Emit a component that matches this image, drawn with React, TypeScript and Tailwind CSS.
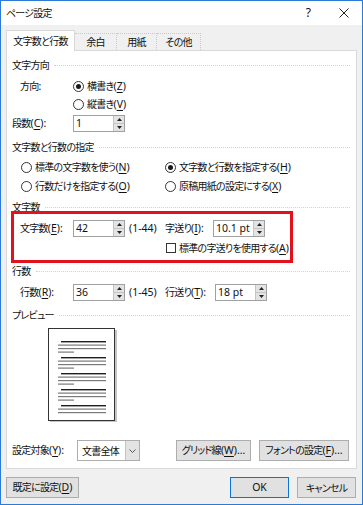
import React from "react";

const F = { fontFamily: '"Noto Sans CJK JP", "Noto Sans", sans-serif' };
const LAT = "font-['Noto_Sans',sans-serif] text-[10.5px] tracking-normal";

function L({ children }: { children: React.ReactNode }) {
  return <span className={LAT}>{children}</span>;
}

function Lab({ t, k, s }: { t: string; k: string; s?: string }) {
  return (
    <span>
      {t}
      <span className={LAT}>
        (<span className="underline underline-offset-[1.5px]">{k}</span>){s ?? ""}
      </span>
    </span>
  );
}

function Radio({ on }: { on?: boolean }) {
  return (
    <span className="w-[11px] h-[11px] rounded-full border border-[#333] bg-white flex items-center justify-center shrink-0">
      {on && <span className="w-[5px] h-[5px] rounded-full bg-[#1a1a1a]" />}
    </span>
  );
}

function Spin({ value, w }: { value: string; w: number }) {
  return (
    <div
      className="h-[17px] border border-[#a0a0a0] bg-white flex items-stretch shrink-0"
      style={{ width: w }}
    >
      <div className={"flex-1 pl-[2px] flex items-center " + LAT}>{value}</div>
      <div className="w-[11px] flex flex-col border-l border-[#c4c4c4]">
        <div className="flex-1 bg-[#e3e3e3] border-b border-[#c4c4c4] flex items-center justify-center">
          <svg width="5" height="3" viewBox="0 0 5 3"><path d="M0 3L2.5 0L5 3Z" fill="#222" /></svg>
        </div>
        <div className="flex-1 bg-[#e3e3e3] flex items-center justify-center">
          <svg width="5" height="3" viewBox="0 0 5 3"><path d="M0 0L5 0L2.5 3Z" fill="#222" /></svg>
        </div>
      </div>
    </div>
  );
}

function Section({ title }: { title: string }) {
  return (
    <div className="h-[16px] flex items-center gap-[5px] pr-[1px]">
      <span>{title}</span>
      <div className="flex-1 border-t border-dotted border-[#d2d2d2]" />
    </div>
  );
}

function Btn({ children, w, def }: { children: React.ReactNode; w: number; def?: boolean }) {
  return (
    <div
      className={
        "h-[21px] flex items-center justify-center bg-[#e1e1e1] shrink-0 border " +
        (def ? "border-[#0a74d6]" : "border-[#adadad]")
      }
      style={{ width: w }}
    >
      {children}
    </div>
  );
}

function Preview() {
  const groups = [0, 1, 2, 3, 4];
  return (
    <svg width="70" height="96" viewBox="0 0 70 96">
      <rect x="2" y="2" width="67" height="93" fill="#c4c4c4" />
      <rect x="0.5" y="0.5" width="66" height="92" fill="#fff" stroke="#333" />
      {groups.map((g) => {
        const y = 13 + g * 16;
        return (
          <g key={g}>
            <rect x="13" y={y} width="45" height="1.4" fill="#1e1e1e" />
            <rect x="10" y={y + 3.5} width="48" height="1.2" fill="#7a7a7a" />
            <rect x="10" y={y + 7} width="48" height="1.2" fill="#7a7a7a" />
            {g < 4 && <rect x="10" y={y + 10.5} width="16" height="1.2" fill="#7a7a7a" />}
          </g>
        );
      })}
    </svg>
  );
}

export default function App() {
  return (
    <div
      style={F}
      className="relative w-[363px] h-[505px] bg-[#f0f0f0] border border-[#2b7bd6] text-[#111] text-[10px] tracking-[-0.75px] [font-feature-settings:'palt'] leading-none whitespace-nowrap flex flex-col overflow-hidden"
    >
      {/* title bar */}
      <div className="h-[24px] bg-white flex items-center pl-[5px] pr-[13px] shrink-0">
        <span className="flex-1">ページ設定</span>
        <span className={LAT + " text-[12px] mr-[28px]"}>?</span>
        <svg width="10" height="10" viewBox="0 0 10 10"><path d="M0.5 0.5L9.5 9.5M9.5 0.5L0.5 9.5" stroke="#222" strokeWidth="1" /></svg>
      </div>

      {/* tabs */}
      <div className="h-[26px] flex items-end pl-[5px] shrink-0 relative z-10">
        <div className="h-[21px] w-[69px] bg-white border border-[#d9d9d9] border-b-0 flex items-center justify-center">
          文字数と行数
        </div>
        <div className="h-[17px] w-[42px] border border-dotted border-[#cacaca] border-l-0 border-b-0 flex items-center justify-center mb-[1px]">
          余白
        </div>
        <div className="h-[17px] w-[40px] border border-dotted border-[#cacaca] border-l-0 border-b-0 flex items-center justify-center mb-[1px]">
          用紙
        </div>
        <div className="h-[17px] w-[44px] border border-dotted border-[#cacaca] border-l-0 border-b-0 flex items-center justify-center mb-[1px]">
          その他
        </div>
      </div>

      {/* panel */}
      <div className="mx-[5px] -mt-[1px] h-[419px] bg-white border border-[#d9d9d9] pl-[5px] pr-[5px] pt-[6px] flex flex-col shrink-0">
        <Section title="文字方向" />
        <div className="mt-[4px] h-[18px] flex items-center">
          <span className="w-[61px] pl-[8px]">方向<L>:</L></span>
          <Radio on />
          <span className="ml-[3px]"><Lab t="横書き" k="Z" /></span>
        </div>
        <div className="h-[18px] flex items-center pl-[61px]">
          <Radio />
          <span className="ml-[3px]"><Lab t="縦書き" k="V" /></span>
        </div>
        <div className="mt-[1px] h-[18px] flex items-center">
          <span className="w-[61px]"><Lab t="段数" k="C" s=":" /></span>
          <Spin value="1" w={52} />
        </div>

        <div className="mt-[7px]">
          <Section title="文字数と行数の指定" />
        </div>
        <div className="mt-[3px] h-[18px] flex items-center">
          <div className="w-[153px] flex items-center pl-[9px]">
            <Radio />
            <span className="ml-[3px]"><Lab t="標準の文字数を使う" k="N" /></span>
          </div>
          <Radio on />
          <span className="ml-[3px]"><Lab t="文字数と行数を指定する" k="H" /></span>
        </div>
        <div className="mt-[1px] h-[18px] flex items-center">
          <div className="w-[153px] flex items-center pl-[9px]">
            <Radio />
            <span className="ml-[3px]"><Lab t="行数だけを指定する" k="O" /></span>
          </div>
          <Radio />
          <span className="ml-[3px]"><Lab t="原稿用紙の設定にする" k="X" /></span>
        </div>

        <div className="mt-[4px]">
          <Section title="文字数" />
        </div>
        <div className="mt-[4px] h-[18px] flex items-center">
          <span className="w-[61px] pl-[8px]"><Lab t="文字数" k="E" s=":" /></span>
          <Spin value="42" w={52} />
          <span className="ml-[4px] w-[36px]"><L>(1-44)</L></span>
          <span className="w-[48px]"><Lab t="字送り" k="I" s=":" /></span>
          <Spin value="10.1 pt" w={52} />
        </div>
        <div className="mt-[3px] h-[16px] flex items-center pl-[154px]">
          <span className="w-[10px] h-[10px] border border-[#333] bg-white shrink-0" />
          <span className="ml-[3px]"><Lab t="標準の字送りを使用する" k="A" /></span>
        </div>

        <div className="mt-[7px]">
          <Section title="行数" />
        </div>
        <div className="mt-[4px] h-[18px] flex items-center">
          <span className="w-[61px] pl-[8px]"><Lab t="行数" k="R" s=":" /></span>
          <Spin value="36" w={52} />
          <span className="ml-[4px] w-[36px]"><L>(1-45)</L></span>
          <span className="w-[50px]"><Lab t="行送り" k="T" s=":" /></span>
          <Spin value="18 pt" w={52} />
        </div>

        <div className="mt-[6px]">
          <Section title="プレビュー" />
        </div>
        <div className="mt-[5px] pl-[36px] h-[94px] overflow-hidden shrink-0">
          <Preview />
        </div>

        <div className="mt-[18px] h-[21px] flex items-center">
          <span className="w-[65px]"><Lab t="設定対象" k="Y" s=":" /></span>
          <div className="w-[63px] h-[21px] border border-[#adadad] bg-white flex items-stretch shrink-0">
            <span className="flex-1 pl-[4px] flex items-center">文書全体</span>
            <span className="w-[14px] bg-[#e3e3e3] border-l border-[#c4c4c4] flex items-center justify-center">
              <svg width="7" height="4" viewBox="0 0 7 4"><path d="M0.5 0.5L3.5 3.5L6.5 0.5" stroke="#555" fill="none" /></svg>
            </span>
          </div>
          <div className="ml-[36px]">
            <Btn w={75}><Lab t="グリッド線" k="W" s="..." /></Btn>
          </div>
          <div className="ml-[8px]">
            <Btn w={90}><Lab t="フォントの設定" k="F" s="..." /></Btn>
          </div>
        </div>
      </div>

      {/* bottom buttons */}
      <div className="mt-[8px] pl-[5px] pr-[6px] flex items-center">
        <Btn w={73}><Lab t="既定に設定" k="D" /></Btn>
        <div className="flex-1" />
        <Btn w={59} def><L>OK</L></Btn>
        <div className="ml-[8px]">
          <Btn w={59}>キャンセル</Btn>
        </div>
      </div>

      {/* red annotation */}
      <div className="absolute left-[10px] top-[210px] w-[282px] h-[52px] border-[3px] border-[#e3111b] pointer-events-none" />
    </div>
  );
}
